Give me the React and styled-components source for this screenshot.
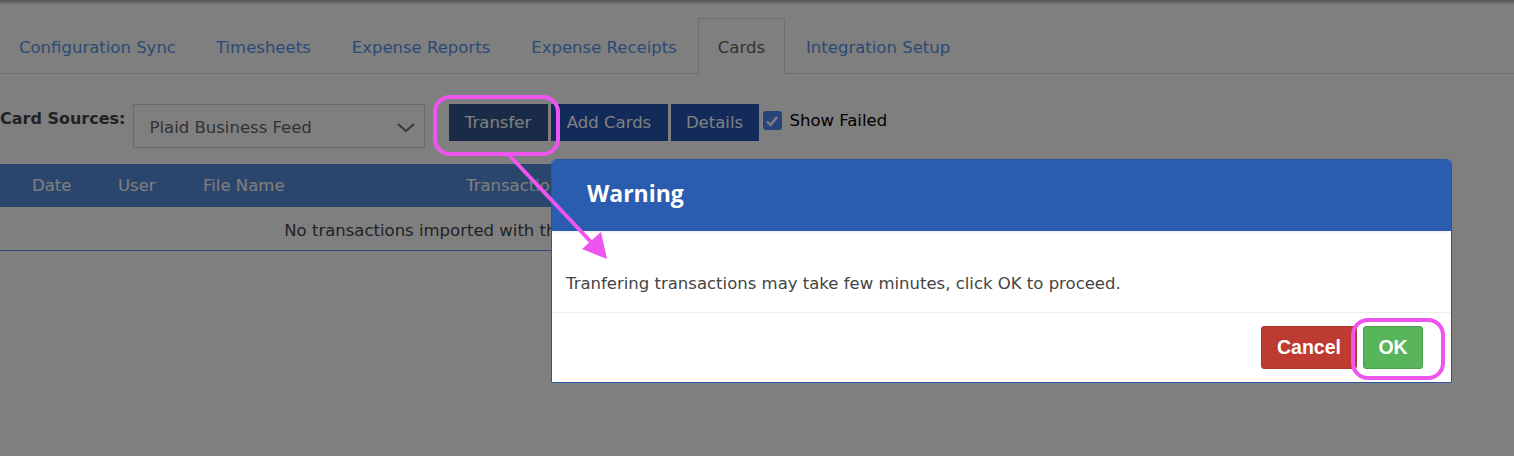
import React from 'react';
import styled, { createGlobalStyle } from 'styled-components';

const GlobalStyle = createGlobalStyle`
  html, body {
    margin: 0;
    padding: 0;
    background: #ffffff;
  }
  body {
    font-family: "DejaVu Sans", Verdana, sans-serif;
    width: 1514px;
    height: 456px;
    overflow: hidden;
  }
`;

const Page = styled.div`
  position: relative;
  width: 1514px;
  height: 456px;
  background: #ffffff;
  overflow: hidden;
`;

const TabBar = styled.nav`
  display: flex;
  padding: 18px 0 0 0;
  border-bottom: 1px solid #dcdcdc;
`;

const Tab = styled.div`
  height: 54px;
  line-height: 57px;
  padding: 0 ${(p) => (p.$first ? '18px' : '19px')};
  margin-right: 1px;
  font-size: 16.5px;
  color: ${(p) => (p.$active ? '#666666' : '#5694ec')};
  background: ${(p) => (p.$active ? '#ffffff' : 'transparent')};
  border: 1px solid ${(p) => (p.$active ? '#dcdcdc' : 'transparent')};
  border-bottom: none;
  margin-bottom: -1px;
  padding-bottom: 1px;
`;

const Toolbar = styled.div`
  display: flex;
  align-items: flex-start;
  margin-top: 30px;
`;

const Label = styled.span`
  font-weight: bold;
  font-size: 16px;
  color: #444444;
  margin-top: 5px;
  margin-right: 7px;
`;

const Select = styled.div`
  box-sizing: border-box;
  width: 292px;
  height: 44px;
  border: 1px solid #d4d4d4;
  display: flex;
  align-items: center;
  justify-content: space-between;
  padding: 2px 8px 0 16px;
  font-size: 16.5px;
  color: #646464;
  margin-right: 24px;
`;

const Button = styled.button`
  box-sizing: border-box;
  height: 37px;
  width: ${(p) => p.$w}px;
  padding: 0;
  margin-right: 3px;
  border: none;
  background: ${(p) => (p.$dark ? '#34568e' : '#2456b4')};
  color: #ffffff;
  font-family: "DejaVu Sans", Verdana, sans-serif;
  font-size: 16.5px;
  cursor: pointer;
`;

const Check = styled.label`
  display: flex;
  align-items: center;
  gap: 8px;
  margin-top: 7px;
  margin-left: 1px;
  font-size: 16.5px;
  color: #000000;
`;

const Box = styled.span`
  box-sizing: border-box;
  width: 19px;
  height: 19px;
  border-radius: 3px;
  background: #4e88f4;
  display: flex;
  align-items: center;
  justify-content: center;
`;

const Table = styled.div`
  width: 978px;
  margin-top: 16px;
  border-bottom: 1px solid #5694f4;
`;

const HeadRow = styled.div`
  display: grid;
  grid-template-columns: 86px 85px 263px 200px 1fr;
  padding-left: 12px;
  height: 43px;
  align-items: center;
  background: #578cd8;
`;

const HeadCell = styled.div`
  padding-left: 20px;
  font-size: 16.5px;
  color: #fefefe;
  white-space: nowrap;
`;

const EmptyRow = styled.div`
  height: 43px;
  padding-top: 3px;
  box-sizing: border-box;
  display: flex;
  align-items: center;
  justify-content: center;
  font-size: 16.5px;
  color: #444444;
`;

const Backdrop = styled.div`
  position: absolute;
  inset: 0;
  background: rgba(0, 0, 0, 0.5);
`;

const TopShade = styled.div`
  position: absolute;
  left: 0;
  right: 0;
  top: 0;
  height: 5px;
  background: linear-gradient(rgba(0, 0, 0, 0.35), rgba(0, 0, 0, 0));
`;

const Modal = styled.div`
  position: absolute;
  left: 551px;
  top: 159px;
  width: 901px;
  height: 224px;
  box-sizing: border-box;
  background: #ffffff;
  border: 1px solid #2b55a0;
  border-radius: 5px 5px 0 0;
  display: flex;
  flex-direction: column;
  overflow: hidden;
`;

const ModalHead = styled.div`
  height: 71px;
  box-sizing: border-box;
  padding: 0 0 5px 35px;
  background: #2a5db0;
  display: flex;
  align-items: center;
  font-family: "Open Sans", "Liberation Sans", sans-serif;
  font-weight: 700;
  font-size: 23px;
  color: #ffffff;
  box-shadow: 0 1px 3px rgba(0, 0, 0, 0.08);
`;

const ModalBody = styled.div`
  height: 82px;
  box-sizing: border-box;
  padding: 43px 0 0 14px;
  font-size: 16.5px;
  color: #444444;
  border-bottom: 1px solid #eeeeee;
`;

const ModalFoot = styled.div`
  flex: 1;
  display: flex;
  justify-content: flex-end;
  align-items: flex-start;
  gap: 6px;
  padding: 13px 28px 0 0;
`;

const ActionButton = styled.button`
  box-sizing: border-box;
  height: 43px;
  width: ${(p) => p.$w}px;
  padding: 0;
  border: 1px solid ${(p) => (p.$ok ? '#4a9e4a' : '#b0352b')};
  border-radius: 3px;
  background: ${(p) => (p.$ok ? '#58b55b' : '#bd3b30')};
  color: #ffffff;
  font-family: "Liberation Sans", Arial, sans-serif;
  font-weight: 700;
  font-size: 19.5px;
`;

const Annotations = styled.svg`
  position: absolute;
  left: 0;
  top: 0;
  pointer-events: none;
`;

const tabs = [
  'Configuration Sync',
  'Timesheets',
  'Expense Reports',
  'Expense Receipts',
  'Cards',
  'Integration Setup',
];

const columns = ['Date', 'User', 'File Name', 'Transactions', 'Status'];

export default function App() {
  return (
    <>
      <GlobalStyle />
      <Page>
        <TabBar>
          {tabs.map((t, i) => (
            <Tab key={t} $first={i === 0} $active={t === 'Cards'}>
              {t}
            </Tab>
          ))}
        </TabBar>

        <Toolbar>
          <Label>Card Sources:</Label>
          <Select>
            <span>Plaid Business Feed</span>
            <svg width="20" height="20" viewBox="0 0 20 20">
              <path d="M2 7 L10 14 L18 7" fill="none" stroke="#666" strokeWidth="1.8" />
            </svg>
          </Select>
          <Button $dark $w={99}>Transfer</Button>
          <Button $w={117}>Add Cards</Button>
          <Button $w={88}>Details</Button>
          <Check>
            <Box>
              <svg width="14" height="14" viewBox="0 0 14 14">
                <path d="M2 7.5 L5.5 11 L12 3" fill="none" stroke="#fff" strokeWidth="2.4" />
              </svg>
            </Box>
            Show Failed
          </Check>
        </Toolbar>

        <Table>
          <HeadRow>
            {columns.map((c) => (
              <HeadCell key={c}>{c}</HeadCell>
            ))}
          </HeadRow>
          <EmptyRow>No transactions imported with the selected filters</EmptyRow>
        </Table>

        <Backdrop />
        <TopShade />

        <Modal>
          <ModalHead>Warning</ModalHead>
          <ModalBody>Tranfering transactions may take few minutes, click OK to proceed.</ModalBody>
          <ModalFoot>
            <ActionButton $w={96}>Cancel</ActionButton>
            <ActionButton $ok $w={60}>OK</ActionButton>
          </ModalFoot>
        </Modal>

        <Annotations width="1514" height="456" viewBox="0 0 1514 456">
          <rect x="435" y="97" width="123" height="57" rx="15" fill="none" stroke="#ee55ee" strokeWidth="4" />
          <rect x="1353" y="320" width="90" height="58" rx="15" fill="none" stroke="#ee55ee" strokeWidth="4" />
          <line x1="509" y1="155" x2="592" y2="243" stroke="#ee55ee" strokeWidth="4" />
          <polygon points="607,259 582,249 601,232" fill="#ee55ee" />
        </Annotations>
      </Page>
    </>
  );
}
